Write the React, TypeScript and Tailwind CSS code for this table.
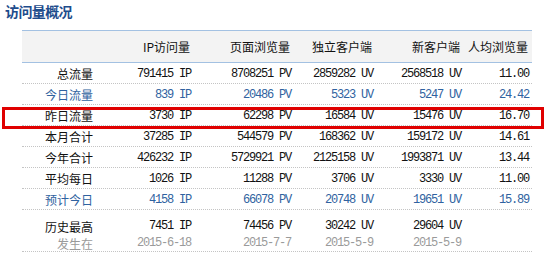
import React from "react";

type Row = { label: string; v: string[]; tone: "n" | "b" };

const rows: Row[] = [
  { label: "总流量", v: ["791415", "8708251", "2859282", "2568518", "11.00"], tone: "n" },
  { label: "今日流量", v: ["839", "20486", "5323", "5247", "24.42"], tone: "b" },
  { label: "昨日流量", v: ["3730", "62298", "16584", "15476", "16.70"], tone: "n" },
  { label: "本月合计", v: ["37285", "544579", "168362", "159172", "14.61"], tone: "n" },
  { label: "今年合计", v: ["426232", "5729921", "2125158", "1993871", "13.44"], tone: "n" },
  { label: "平均每日", v: ["1026", "11288", "3706", "3330", "11.00"], tone: "n" },
  { label: "预计今日", v: ["4158", "66078", "20748", "19651", "15.89"], tone: "b" },
];

const units = ["IP", "PV", "UV", "UV", ""];
const cols = "grid grid-cols-[75px_97px_100px_82px_88px_68px]";
const cjk = "font-['Noto_Sans_CJK_SC',sans-serif]";
const mono = "font-['Liberation_Mono','Noto_Sans_CJK_SC',monospace] tracking-[-1.2px]";

function Num({ text, className = "" }: { text: string; className?: string }) {
  return (
    <div className={`text-right pr-[3px] whitespace-pre text-[12px] leading-[15px] ${mono} ${className}`}>{text}</div>
  );
}

export default function App() {
  return (
    <div className="relative w-[547px] h-[259px] bg-white overflow-hidden">
      <div className={`pl-[5px] pt-[1px] h-[30px] text-[14px] leading-[20px] font-bold tracking-[-0.6px] text-[#1d4c8c] ${cjk}`}>
        访问量概况
      </div>
      <div className="ml-[22px] w-[510px] text-[12px] text-[#111]">
        <div className={`${cols} h-[33px] items-center bg-[#f3f3f3] border-y border-[#a3c1e2] ${cjk}`}>
          <div />
          <div className="text-right pr-[4px]">IP访问量</div>
          <div className="text-right pr-[4px]">页面浏览量</div>
          <div className="text-right pr-[4px]">独立客户端</div>
          <div className="text-right pr-[4px]">新客户端</div>
          <div className="text-right pr-[4px]">人均浏览量</div>
        </div>
        {rows.map((r) => (
          <div
            key={r.label}
            className={`${cols} h-[21px] pt-[2px] items-center border-b border-dotted border-[#c4c4c4] ${r.tone === "b" ? "text-[#2f62a0]" : "text-[#111]"}`}
          >
            <div className={`text-right pr-[4px] text-[12px] leading-[18px] ${cjk}`}>{r.label}</div>
            {r.v.map((v, i) => (
              <Num key={i} text={units[i] ? `${v} ${units[i]}` : v} />
            ))}
          </div>
        ))}
        <div className="h-[42px] pt-[8px] border-b border-dotted border-[#c4c4c4]">
          <div className={`${cols} h-[17px] items-center text-[#111]`}>
            <div className={`text-right pr-[4px] text-[12px] leading-[17px] ${cjk}`}>历史最高</div>
            <Num text="7451 IP" />
            <Num text="74456 PV" />
            <Num text="30242 UV" />
            <Num text="29604 UV" />
            <div />
          </div>
          <div className={`${cols} h-[17px] items-center text-[#9a9a9a]`}>
            <div className={`text-right pr-[4px] text-[12px] leading-[17px] ${cjk}`}>发生在</div>
            <Num text="2015-6-18" />
            <Num text="2015-7-7" />
            <Num text="2015-5-9" />
            <Num text="2015-5-9" />
            <div />
          </div>
        </div>
      </div>
      <div className="absolute left-[2px] top-[107px] w-[542px] h-[22px] border-[3px] border-[#e00000]" />
    </div>
  );
}
